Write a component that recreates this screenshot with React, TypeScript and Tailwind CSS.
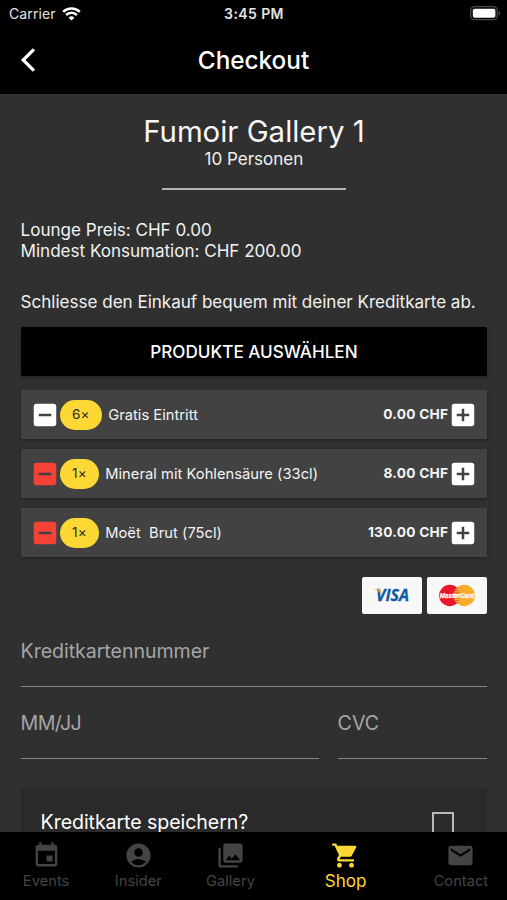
import {
  MdAccountCircle,
  MdAddBox,
  MdEmail,
  MdEvent,
  MdIndeterminateCheckBox,
  MdPhotoLibrary,
  MdShoppingCart,
} from 'react-icons/md'

type CartItem = {
  key: string
  name: string
  quantity: number
  price: string
  removable: boolean
}

const cartItems: CartItem[] = [
  { key: 'entry', name: 'Gratis Eintritt', quantity: 6, price: '0.00', removable: false },
  { key: 'mineral', name: 'Mineral mit Kohlensäure (33cl)', quantity: 1, price: '8.00', removable: true },
  { key: 'moet', name: 'Moët  Brut (75cl)', quantity: 1, price: '130.00', removable: true },
]

const tabs = [
  { key: 'events', label: 'Events', Icon: MdEvent },
  { key: 'insider', label: 'Insider', Icon: MdAccountCircle },
  { key: 'gallery', label: 'Gallery', Icon: MdPhotoLibrary },
  { key: 'shop', label: 'Shop', Icon: MdShoppingCart },
  { key: 'contact', label: 'Contact', Icon: MdEmail },
]

function StatusBar() {
  return (
    <div className="grid h-[27px] grid-cols-3 items-center px-[6px] text-[14px] text-[#e4e4e4]">
      <div className="flex items-center gap-[6px] pl-[3px]">
        <span className="tracking-[0.1px]">Carrier</span>
        <svg className="h-[14px] w-[19px]" viewBox="0 0 19 14" fill="none" stroke="#fff" strokeWidth="2.5">
          <path d="M1.2 4.9a11.8 11.8 0 0 1 16.6 0" />
          <path d="M4.1 8a7.7 7.7 0 0 1 10.8 0" />
          <path d="M9.5 13.6 6.6 10.7a4.1 4.1 0 0 1 5.8 0z" fill="#fff" stroke="none" />
        </svg>
      </div>
      <span className="pl-px text-center font-semibold tracking-[0.4px]">3:45 PM</span>
      <svg className="h-[15px] w-[31px] justify-self-end" viewBox="0 0 31 15">
        <rect x="0.7" y="0.7" width="26.6" height="13" rx="3.8" fill="none" stroke="#4a4a4a" strokeWidth="1.3" />
        <rect x="2.8" y="2.7" width="22.6" height="9" rx="1.8" fill="#fff" />
        <path d="M28.8 5v4.6c1.9-.8 1.9-3.8 0-4.6z" fill="#555" />
      </svg>
    </div>
  )
}

function CartRow({ item }: { item: CartItem }) {
  return (
    <div className="flex h-[49px] items-center bg-[#424242] px-[9px] text-[#f4f4f4] shadow-[0_1px_3px_rgba(0,0,0,0.35)]">
      <MdIndeterminateCheckBox
        className={`size-[30px] shrink-0 ${item.removable ? 'text-[#f44336]' : 'text-white'}`}
      />
      <span className="flex h-[30px] items-center rounded-full bg-[#fdd835] px-[12.3px] text-[13.7px] tracking-[0.2px] text-[#2b2b2b]">
        {item.quantity}×
      </span>
      <span className="ml-[6px] pt-[2px] text-[14.7px] tracking-[0.03px] whitespace-pre">{item.name}</span>
      <span className="ml-auto text-[13.7px] font-bold tracking-[0.25px]">{item.price} CHF</span>
      <MdAddBox className="size-[30px] shrink-0 text-white" />
    </div>
  )
}

function CardLogos() {
  return (
    <div className="mt-[20px] flex justify-end gap-[5px]">
      <div className="h-[37px] w-[60px] rounded-[2px] bg-[#f8f8f8]">
        <svg className="size-full" viewBox="0 0 60 37">
          <text
            x="14"
            y="24"
            textLength="33"
            lengthAdjust="spacingAndGlyphs"
            fontFamily="'Open Sans', sans-serif"
            fontSize="16.5"
            fontWeight="700"
            fontStyle="italic"
            fill="#0b5ba5"
            stroke="#0b5ba5"
            strokeWidth="0.3"
          >
            VISA
          </text>
          <path d="M12.4 12.3h4.6c1 0 1.4.4 1.6 1.2l.9 4.3c-1.3-2.500-3.400-4.300-7.100-5.200z" fill="#f2a42b" />
        </svg>
      </div>
      <div className="h-[37px] w-[60px] rounded-[2px] bg-[#f8f8f8]">
        <svg className="size-full" viewBox="0 0 60 37">
          <circle cx="22.800" cy="18.500" r="10.700" fill="#e9162c" />
          <circle cx="37.200" cy="18.500" r="10.700" fill="#f9ab2c" />
          <path
            d="M29 11.700h2M27.700 13.700h4.500M27 15.700h5.500M26.800 21.500h5.500M27.500 23.500h4.500M29 25.500h2"
            stroke="#e9562c"
            strokeWidth="0.9"
          />
          <text
            x="12.800"
            y="21.300"
            textLength="34.500"
            lengthAdjust="spacingAndGlyphs"
            fontFamily="'Liberation Sans', sans-serif"
            fontSize="8"
            fontWeight="700"
            fontStyle="italic"
            fill="#fff"
            stroke="#fff"
            strokeWidth="0.25"
          >
            MasterCard
          </text>
        </svg>
      </div>
    </div>
  )
}

function Field({ label, className = '' }: { label: string; className?: string }) {
  return (
    <div className={`border-b border-[#868686] text-[19.6px] leading-[24px] text-[#a5a5a5] ${className}`}>
      {label}
    </div>
  )
}

export default function App() {
  return (
    <div className="flex h-[900px] w-[507px] flex-col overflow-hidden bg-[#303030] font-['Inter',sans-serif] text-white">
      <header className="h-[94px] shrink-0 bg-black">
        <StatusBar />
        <div className="grid h-[66px] grid-cols-[1fr_auto_1fr] items-center">
          <svg
            className="ml-[20px] h-[24px] w-[16px]"
            viewBox="0 0 16 24"
            fill="none"
            stroke="currentColor"
            strokeWidth="3.2"
          >
            <path d="M13.900 1.300 3.200 12l10.700 10.700" />
          </svg>
          <h1 className="text-[24.3px] font-medium">Checkout</h1>
        </div>
      </header>

      <main className="min-h-0 flex-1 overflow-hidden pr-[19.7px] pl-[20.6px]">
        <div className="flex flex-col items-center pt-[20px]">
          <h2 className="text-[29.4px] leading-[35px] text-[#f7f7f7]">Fumoir Gallery 1</h2>
          <p className="text-[17.1px] leading-[20px] tracking-[-0.05px] text-[#f0f0f0]">10 Personen</p>
          <div className="mt-[19px] h-[2px] w-[184px] bg-[#b4b4b4]" />
        </div>

        <div className="mt-[29px] text-[17.1px] leading-[21px] tracking-[-0.03px] text-[#f2f2f2]">
          <p>Lounge Preis: CHF 0.00</p>
          <p>Mindest Konsumation: CHF 200.00</p>
          <p className="mt-[30px] whitespace-nowrap">Schliesse den Einkauf bequem mit deiner Kreditkarte ab.</p>
        </div>

        <button
          type="button"
          className="mt-[15px] flex h-[49px] w-full items-center justify-center rounded-[2px] bg-black text-[17.1px] font-medium shadow-[0_1px_3px_rgba(0,0,0,0.4)]"
        >
          PRODUKTE AUSWÄHLEN
        </button>

        <div className="mt-[14px] flex flex-col gap-[10px]">
          {cartItems.map((item) => (
            <CartRow key={item.key} item={item} />
          ))}
        </div>

        <CardLogos />

        <Field label="Kreditkartennummer" className="mt-[25px] h-[48px] tracking-[-0.05px]" />
        <div className="mt-[24px] flex gap-[19px]">
          <Field label="MM/JJ" className="h-[48px] w-[298px] tracking-[-0.6px]" />
          <Field label="CVC" className="h-[48px] flex-1" />
        </div>

        <div className="mt-[29px] flex h-[69px] items-center justify-between bg-[#2a2a2a] pr-[33px] pl-[20px]">
          <span className="text-[19.6px] tracking-[-0.08px]">Kreditkarte speichern?</span>
          <span className="size-[22px] border-2 border-[#b9b9b9]" />
        </div>
      </main>

      <nav className="flex h-[68px] shrink-0 bg-black">
        {tabs.map(({ key, label, Icon }) => (
          <div
            key={key}
            className={`flex basis-0 flex-col items-center pt-[9px] ${
              key === 'shop' ? 'grow-[1.5] text-[#fdd835]' : 'grow text-[#444444]'
            }`}
          >
            <Icon className="size-[29px]" />
            <span
              className={
                key === 'shop'
                  ? 'text-[17.1px] leading-[21px]'
                  : 'mt-[2px] text-[14.7px] leading-[19px]'
              }
            >
              {label}
            </span>
          </div>
        ))}
      </nav>
    </div>
  )
}
